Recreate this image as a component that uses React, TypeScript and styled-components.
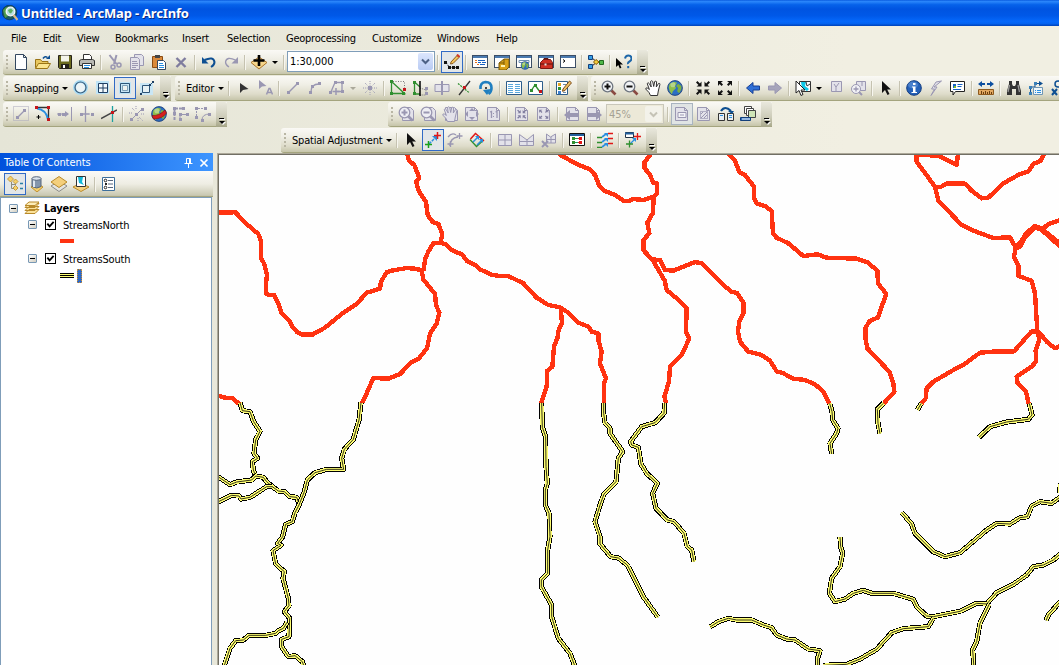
import React from "react";
import styled, { createGlobalStyle, css } from "styled-components";

const GlobalStyle = createGlobalStyle`
  html, body { margin: 0; padding: 0; overflow: hidden; }
  body { font-family: "DejaVu Sans Condensed", "DejaVu Sans", sans-serif; font-stretch: condensed; font-size: 11px; color: #000; }
  * { box-sizing: border-box; }
`;

const Window = styled.div`
  width: 1059px;
  height: 665px;
  display: flex;
  flex-direction: column;
  overflow: hidden;
  background: linear-gradient(90deg, #e5e5d7 0%, #f1efe2 80%);
`;

const TitleBar = styled.header`
  height: 26px;
  flex: none;
  display: flex;
  align-items: center;
  gap: 3px;
  padding: 0 2px;
  background: linear-gradient(180deg, #0a5ce0 0%, #2a86fb 6%, #0662ea 18%, #0054e1 35%, #0058e8 60%, #0568fb 82%, #0464f2 90%, #0042b8 100%);
`;

const TitleText = styled.h1`
  margin: 0;
  font: bold 13px "Noto Sans", "Open Sans", sans-serif;
  line-height: 26px;
  letter-spacing: -0.18px;
  color: #fff;
  text-shadow: 1px 1px 0 #0a2a80;
  white-space: nowrap;
`;

const MenuBar = styled.nav`
  height: 24px;
  flex: none;
  display: flex;
  padding: 1px 0 0 11px;
`;

const MenuItem = styled.span<{ $w: number }>`
  width: ${(p) => p.$w}px;
  flex: none;
  line-height: 24px;
  letter-spacing: -0.25px;
  white-space: nowrap;
`;

const ToolRow = styled.div<{ $indent?: number }>`
  display: flex;
  height: 25px;
  flex: none;
  margin-bottom: 1px;
  padding-left: ${(p) => p.$indent ?? 3}px;
`;

const Bar = styled.div<{ $before?: number }>`
  display: flex;
  flex: none;
  height: 25px;
  margin-left: ${(p) => p.$before ?? 0}px;
  border-bottom: 1px solid #a4a47e;
  border-radius: 3px 0 0 3px;
  background: linear-gradient(180deg, #faf9f5 0%, #f0efe6 35%, #dedcca 75%, #c6c5aa 100%);
`;

const Grip = styled.i`
  width: 7px;
  flex: none;
  height: 16px;
  margin-top: 4px;
  background: radial-gradient(circle at 4px 2px, #b9b6a4 0 1.2px, transparent 1.4px) 0 0 / 7px 4px repeat-y;
`;

const pressed = css`
  background: #e2e6e8;
  border-color: #316ac5;
`;

const Tool = styled.span<{ $on?: boolean; $muted?: boolean }>`
  width: 22px;
  height: 22px;
  flex: none;
  margin-top: 1px;
  border: 1px solid transparent;
  display: flex;
  align-items: center;
  justify-content: center;
  ${(p) => p.$on && pressed}
  ${(p) => p.$muted && css`background: #e0e4e4; border-color: #a9b4c0;`}
`;

const Sep = styled.i`
  width: 6px;
  flex: none;
  height: 15px;
  margin-top: 5px;
  background: linear-gradient(90deg, transparent 2px, #c5c2b0 2px 3px, #f7f6ef 3px 4px, transparent 4px);
`;

const Caret = styled.i<{ $off?: boolean }>`
  width: 11px;
  flex: none;
  display: flex;
  align-items: center;
  justify-content: center;
  &::after {
    content: "";
    border: 3px solid transparent;
    border-top-color: ${(p) => (p.$off ? "#aaa89a" : "#000")};
    border-bottom: 0;
  }
`;

const DropTool = styled(Caret)`
  justify-content: flex-start;
  padding-left: 2px;
`;

const TextTool = styled.span<{ $w: number }>`
  width: ${(p) => p.$w}px;
  flex: none;
  display: flex;
  align-items: center;
  justify-content: space-between;
  padding: 1px 0 1px 4px;
  letter-spacing: -0.2px;
  white-space: nowrap;
`;

const Overflow = styled.span`
  width: 11px;
  height: 25px;
  flex: none;
  margin-left: 2px;
  display: flex;
  flex-direction: column;
  align-items: center;
  justify-content: flex-end;
  gap: 2px;
  padding-bottom: 3px;
  border-radius: 0 2px 2px 0;
  background: linear-gradient(180deg, #e9e8dd, #cdccb9 60%, #a6a688);
  &::before { content: ""; width: 5px; height: 1px; background: #000; box-shadow: 1px 1px #fff; }
  &::after { content: ""; border: 3px solid transparent; border-top-color: #000; border-bottom: 0; filter: drop-shadow(1px 1px 0 #fff); }
`;

const Combo = styled.span<{ $w: number; $off?: boolean }>`
  width: ${(p) => p.$w}px;
  height: ${(p) => (p.$off ? 20 : 21)}px;
  margin: ${(p) => (p.$off ? "2px 1px 0" : "1px 0 0")};
  flex: none;
  display: flex;
  align-items: center;
  justify-content: space-between;
  padding: 1px 1px 1px 2px;
  border: 1px solid ${(p) => (p.$off ? "#c9c7ba" : "#7f9db9")};
  background: ${(p) => (p.$off ? "#ece9d8" : "#fff")};
  color: ${(p) => (p.$off ? "#a5a294" : "#000")};
  font-size: 11px;
  letter-spacing: -0.1px;
`;

const ComboButton = styled.span<{ $off?: boolean }>`
  width: ${(p) => (p.$off ? 17 : 15)}px;
  height: 100%;
  display: flex;
  align-items: center;
  justify-content: center;
  border-radius: 2px;
  background: ${(p) => (p.$off ? "#f3f2ea" : "linear-gradient(180deg, #dce6fd, #b9cbf3)")};
`;

const Workspace = styled.main`
  flex: 1;
  min-height: 0;
  display: flex;
  margin-top: -1px;
`;

const Contents = styled.aside`
  width: 213px;
  flex: none;
  display: flex;
  flex-direction: column;
`;

const PanelTitle = styled.div`
  height: 18px;
  flex: none;
  display: flex;
  align-items: center;
  padding: 1px 4px 0 4px;
  color: #fff;
  letter-spacing: -0.05px;
  background: linear-gradient(90deg, #0051dc, #3d95ff);
  span { flex: 1; }
`;

const PanelTools = styled.div`
  height: 26px;
  flex: none;
  display: flex;
  padding: 1px 0 0 4px;
  background: linear-gradient(180deg, #fbfaf7 0%, #eeede3 50%, #c9c8b1 94%, #a4a47e 97%);
`;

const Tree = styled.div`
  flex: 1;
  width: 212px;
  border: 1px solid #7f9db9;
  border-bottom: 0;
  background: #fff;
  padding-top: 2px;
`;

const Node = styled.div<{ $depth: number }>`
  height: ${(p) => (p.$depth ? 17 : 16)}px;
  display: flex;
  align-items: center;
  padding-left: ${(p) => (p.$depth ? 27 : 8)}px;
  font-weight: ${(p) => (p.$depth ? "normal" : "bold")};
  white-space: nowrap;
`;

const NodeLabel = styled.span<{ $gap: number }>`
  margin-left: ${(p) => p.$gap}px;
  padding-top: ${(p) => (p.$gap > 10 ? 0 : 1)}px;
  letter-spacing: ${(p) => (p.$gap > 10 ? 0.1 : -0.2)}px;
`;

const Expander = styled.i`
  width: 9px;
  height: 9px;
  flex: none;
  border: 1px solid #7898b5;
  border-radius: 1px;
  background: linear-gradient(#000, #000) 1px 3px / 5px 1px no-repeat, linear-gradient(135deg, #fff, #d2cec0);
`;

const Check = styled.i`
  width: 11px;
  height: 11px;
  flex: none;
  margin-left: 8px;
  border: 1px solid #000;
  display: flex;
  svg { width: 9px; height: 9px; }
`;

const SymbolRow = styled.div`
  height: 17px;
  display: flex;
  align-items: center;
  padding-left: 59px;
  gap: 3px;
`;

const NorthSwatch = styled.i`
  width: 14px;
  height: 4px;
  margin-bottom: 1px;
  background: #ff3311;
`;

const SouthSwatch = styled.i`
  width: 14px;
  height: 5px;
  background: repeating-linear-gradient(180deg, #000 0 1px, #ffff73 1px 2px);
`;

const LabelEdit = styled.i`
  width: 5px;
  height: 14px;
  background: #316ac5;
  outline: 1px dotted #d09030;
  outline-offset: -1px;
`;

const MapFrame = styled.section`
  flex: 1;
  margin-left: 4px;
  border: solid #aca899;
  border-width: 1px 0 0 1px;
  padding: 1px 0 0 1px;
  background: #716f64;
  svg { display: block; background: #fefefe; }
`;

/* ---------- icons ---------- */

const D = "#9a97b2";
const DL = "#e3e2ea";
const R = "#c4161c";
const GR = "#2f8f2f";
const B = "#0e4f92";
const LB = "#2a8fe0";

const P = ({ d, s = "none", f = "none", w = 1, dash }: { d: string; s?: string; f?: string; w?: number; dash?: string }) => (
  <path d={d} stroke={s} fill={f} strokeWidth={w} strokeDasharray={dash} />
);

const Dots = ({ at, c, n = 3 }: { at: number[][]; c: string; n?: number }) => (
  <>
    {at.map(([x, y]) => (
      <rect key={`${x}-${y}`} x={x} y={y} width={n} height={n} fill={c} shapeRendering="crispEdges" />
    ))}
  </>
);

const Page = ({ x = 1.5 }: { x?: number }) => <P d={`M${x} 1.5h9l3 3v10h-12z M${x + 9} 1.5v3h3`} s={D} f={DL} />;
const PointerShape = ({ x = 0, c = "#111" }: { x?: number; c?: string }) => (
  <path transform={`translate(${x} 0)`} d="M4 1v12l3-3 2.5 5 2-1-2.3-4.6H13z" fill={c} />
);
const WindowShape = () => (
  <>
    <rect x=".5" y="1.5" width="15" height="12" fill="#fff" stroke="#3c4e66" />
    <rect x="1" y="2" width="14" height="2" fill="#4a7ab0" />
  </>
);
const GlobeShape = ({ cx = 8, cy = 8, r = 7 }: { cx?: number; cy?: number; r?: number }) => (
  <g transform={`translate(${cx} ${cy}) scale(${r / 7})`}>
    <circle r="7" fill="#2d6fc4" stroke="#1d3d73" strokeWidth=".8" />
    <path d="M-5-4l4-2 3 1-2 3 1 2-3 3-1 3-2-3-1-4z" fill="#8fbf4a" />
    <path d="M3-4l3 2v3L4 5 2 3 3 0 1-2z" fill="#7fb042" />
    <circle cx="-2" cy="-3" r="2.4" fill="#fff" opacity=".35" />
  </g>
);
const Corners = ({ c, out }: { c: string; out?: boolean }) =>
  out ? (
    <P f={c} d="M1 1h5l-2 1.6 2 2L4.600 6 2.600 4 1 6z M15 1v5l-1.600-2-2 2L10 4.600l2-2L10 1z M1 15v-5l1.600 2 2-2L6 11.400l-2 2L6 15z M15 15h-5l2-1.600-2-2L11.400 10l2 2L15 10z" />
  ) : (
    <P f={c} d="M6.500 6.500h-5l2-1.600-2.500-2.500L2.400 1l2.500 2.500 1.600-2z M9.500 6.500v-5l1.600 2L13.600 1 15 2.400 12.500 4.900l2 1.600z M6.500 9.500v5l-1.600-2L2.400 15 1 13.600l2.500-2.500-2-1.600z M9.500 9.500h5l-2 1.600L15 13.600 13.600 15l-2.500-2.500-1.600 2z" />
  );
const Lens = ({ minus, off }: { minus?: boolean; off?: boolean }) => (
  <>
    {off && <P d="M4.500 1.500h8l3 3v10h-11z" s={D} f={DL} />}
    <path d="M10 10l4.500 4.500" stroke={off ? D : "#8a4a42"} strokeWidth="2.600" />
    <circle cx="6.500" cy="6.500" r="5.300" fill={off ? "#eeeef4" : "#f1f3f5"} stroke={off ? D : "#6f7680"} strokeWidth="1.300" />
    <path d={minus ? "M3.500 6.500h6" : "M3.500 6.500h6M6.500 3.500v6"} stroke={off ? D : "#111"} strokeWidth="2" />
  </>
);
const Hand = ({ off }: { off?: boolean }) => (
  <P
    d="M5.500 15.500L4 12.500 .700 9q0-1.800 2-.8l1.700 1.300L2.200 3.500q1-1.500 2 0L6.200 7 5.500 1.500q1.200-1.500 2.200 0L8.700 6.500 9.700 1.500q1.400-1 1.900.3L11.300 7l2.200-3.500q1.600-.6 1.400 1L13.300 11l-.8 4.500z"
    s={off ? D : "#333"}
    f={off ? DL : "#fff"}
  />
);

const glyphs: Record<string, React.ReactNode> = {
  newdoc: <P d="M2.500.5h8l3 3v12h-11z M10.500.5v3h3" s="#33475f" f="#fdfeff" />,
  open: (
    <>
      <P d="M.5 13.500v-8h5l1.500 2h6v6z" s="#9a7416" f="#e9c860" />
      <P d="M.5 14.500l3-5h12l-3 5z" s="#9a7416" f="#fbe58f" />
      <P d="M8 4.500q2-3 4.500-1" s={B} w={1.500} />
      <P d="M11 5h4V1z" f={B} />
    </>
  ),
  save: (
    <>
      <P d="M1.500 1.500h13v13h-12l-1-1z" s="#26221a" f="#6b6a1e" />
      <P d="M4 1.500h8v6H4z" f="#f4f4ea" />
      <P d="M4 10h8v4.500H4z" f="#26221a" />
      <P d="M6 11h2v3H6z" f="#fff" />
    </>
  ),
  print: (
    <>
      <P d="M4.500 6V.5h6l2 2V6" s="#333" f="#fff" />
      <P d="M.5 6.500l2-1h11l2 1v5h-15z" s="#333" f="#b9b9b4" />
      <P d="M3.500 9.500h9v5h-9z" s="#333" f="#fff" />
      <P d="M5 11.500h6M5 13.500h5" s={LB} />
    </>
  ),
  cut: (
    <>
      <P d="M2.500 1l7 9M9.500 1L7 10" s={D} w={2} />
      <circle cx="6" cy="13" r="2" fill="none" stroke={D} strokeWidth="1.500" />
      <circle cx="12" cy="11" r="2" fill="none" stroke={D} strokeWidth="1.500" />
    </>
  ),
  copy: (
    <>
      <P d="M5.500.5h7l2 2v9h-9z" s={D} f={DL} />
      <P d="M1.500 3.500h7l2 2v10h-9z M3 7.500h5M3 9.500h6M3 11.500h6M3 13.500h4" s={D} f={DL} />
    </>
  ),
  paste: (
    <>
      <P d="M1.500 2.500h10v11h-10z" s="#8a4b12" f="#d9893a" />
      <P d="M4 1h5v3H4z" f="#444" />
      <P d="M6.500 6.500h6l2 2v7h-8z" s="#33475f" f="#fff" />
      <P d="M8 9.500h4M8 11.500h5M8 13.500h5" s={LB} />
    </>
  ),
  del: <P d="M3.500 4l9 9M12.500 4l-9 9" s="#7f7c9e" w={2.400} />,
  undo: <><P d="M3.500 6q9-4 10 2 0 3-3.500 5" s={B} w={2} /><P d="M1 3v6.500h6.500z" f={B} /></>,
  redo: <><P d="M12.500 6q-9-4-10 2 0 3 3.500 5" s={D} w={1.300} /><P d="M15 3v6.500H8.500z" f={D} /></>,
  add: (
    <>
      <P d="M0 8.500L8 3l8 5.500L8 15z" f="#f6d58a" s="#a9732a" />
      <P d="M8 1v11M2.500 6.500h11" s="#000" w={2.600} />
    </>
  ),
  sketch: (
    <>
      <P d="M2 8.500l3.500 5H14" s="#222" dash="2 1" />
      <Dots c="#111" at={[[0, 7], [4, 12], [12, 12], [8, 12]]} />
      <P d="M7 8L13 1.500l2 2L9 9.500l-2.500.5z" s="#8a5a20" f="#f3c35c" />
      <P d="M13 .500L15.500 3" s="#d23a2a" w={2} />
    </>
  ),
  toc: <><WindowShape /><P d="M3 6.500h2M3 8.500h2M5 10.500h2" s="#e07020" /><P d="M6 6.500h7M6 8.500h3M10 8.500h4M8 10.500h5" s="#1762c4" /></>,
  catalog: <><WindowShape /><P d="M5 9l5-4h5v8l-3 3H5z" f="#d8a017" s="#7a5a08" /><P d="M10 5v8M5 9h5" s="#7a5a08" /><P d="M7 11h4v2H7z" f="#fff3b0" /></>,
  search: <><WindowShape /><P d="M3 6.500h10v2H3z" s="#6f8fb0" f="#fff" /><GlobeShape cx={9} cy={11.500} r={4} /></>,
  toolbox: <><WindowShape /><P d="M2.500 8.500l3-3h7l2 3v6h-12z" f="#cf3022" s="#7e1a12" /><P d="M6 6V4.500h4V6M2 10h12" s="#5a120c" /><P d="M6.500 9.500h2v2h-2z" f="#e7e2dc" /></>,
  python: <><WindowShape /><P d="M3 5.500l2 1.500-2 1.500" s="#000" /></>,
  model: (
    <>
      <P d="M4 4l5 4M4 12l5-4M9 8h4" s="#222" />
      <P d="M.5 1.500h4v4h-4z M.5 10.500h4v4h-4z" s="#123f7a" f="#36a0e8" />
      <P d="M8 5.500l3 2.500-3 2.500L5.500 8z" s="#8a5a08" f="#f2cf3c" />
      <P d="M11.500 6.500h4v4h-4z" s="#236a20" f="#50b848" />
    </>
  ),
  help: (
    <>
      <P d="M0 4v9l2.300-2 1.500 3.500 1.600-.7L4 10.500h3z" f="#000" />
      <path d="M9 4.500q.5-3 3.500-3t3 3q0 2-2 3t-1.300 2.500" fill="none" stroke="#1d66a8" strokeWidth="2" />
      <P d="M11.200 12h2v2.200h-2z" f="#1d66a8" />
    </>
  ),
  circle: <><circle cx="7.500" cy="7.500" r="6" fill="#edf4f6" stroke="#a9dcf5" strokeWidth="3" /><circle cx="7.500" cy="7.500" r="5.500" fill="none" stroke="#3a5d7c" strokeWidth="1.200" /></>,
  grid: <><P d="M1 1h13v13H1z" f="#bfe4f7" /><P d="M3.500 3.500h9v9h-9zM8 3v10M3 8h10" s="#1f3f63" f="#f3fafd" /></>,
  square: <><P d="M2 2h12v12H2z" f="#bfe4f7" /><P d="M3.500 3.500h9v9h-9z" s="#2d5578" f="#c8e6f5" /><P d="M5.500 5.500h5v5h-5z" s="#7ea0b8" f="#eff3f0" /></>,
  vertex: <><P d="M1 3h13v12H1z" f="#c9e6f5" /><P d="M3.500 5.500h7v7h-7z" s="#2d5578" f="#e6f1f4" /><P d="M10 6l4-4M1 14.500l2.500-2" s="#2d5578" /><Dots c="#1f3f63" n={2} at={[[13, 1], [10, 4], [1, 13]]} /></>,
  edit: <P d="M5 3v10l3-3 5.500-1z" f="#333" />,
  editA: <><P d="M2 0v9l3-2.500L9.500 6z" f={D} /><P d="M9.500 14.500l2.500-6h1l2.500 6M10.500 12.500h4" s={D} w={1.500} /></>,
  line: <><P d="M4 12l9-9" s={D} w={1.500} /><Dots c={D} at={[[2, 11], [11, 2]]} /></>,
  arc: <><P d="M4 12q0-8 8-8" s={D} w={1.300} /><Dots c={D} at={[[2, 11], [4, 5], [11, 2]]} /></>,
  trace: <><P d="M1.500 13L6 2.500h7v9H8" s={D} w={1.300} /><P d="M7 8v7M3.500 11.500h7" s={D} w={1.500} /><Dots c={D} at={[[5, 1], [12, 1], [12, 10], [0, 11]]} /></>,
  point: <><P d="M8 1v14M1 8h14M3 3l10 10M13 3L3 13" s={D} dash="1 1.200" /><Dots c={D} n={4} at={[[6, 6]]} /></>,
  vertices: <><P d="M1.500 1.500v12h13L1.500 1.500" s={GR} w={1.300} /><P d="M3 1.500h11.500V13" s="#777" dash="1 1.500" /><Dots c={GR} n={3} at={[[0, 0], [0, 12], [12, 12]]} /><Dots c={R} n={3} at={[[13, 8]]} /></>,
  reshape: <><P d="M2.500 2v12H8M2.500 2L8 7" s={GR} w={1.300} /><P d="M8 8l6 2v5H8" s="#777" dash="1 1" /><P d="M8 1v15" s="#000" w={1.500} /><Dots c={GR} at={[[1, 1], [1, 12]]} /><Dots c={D} at={[[13, 7], [13, 12]]} /></>,
  cutpoly: <><P d="M1 4.500h14v7H1z" s={D} f={DL} /><P d="M8 1v14" s={D} w={2} /></>,
  split: <><P d="M3 15L14 1" s="#333" w={1.300} /><P d="M2 3.500l11 9" s={GR} w={1.200} dash="2 1" /><Dots c={R} n={3} at={[[7, 6]]} /></>,
  rotate: <><P d="M2.500 9q-.5-6.500 5-7 6 0 6 6 0 4-3 6" s="#1f7fc0" w={2.600} /><P d="M5 10l8-1-4 6z" f="#1f7fc0" /><Dots c="#444" n={2} at={[[7, 7]]} /></>,
  attrs: <><P d="M.5 1.500h15v13H.5z" s="#2d5d8a" f="#fff" /><P d="M2 4.500h5M9 4.500h5M2 6.500h5M9 6.500h5M2 8.500h5M9 8.500h5M2 10.500h5M9 10.500h5M2 12.500h5M9 12.500h5" s="#5aa8dc" /></>,
  sketchprops: <><P d="M.5 1.500h14v13H.5z" s="#2d5d8a" f="#fff" /><P d="M3 11l4-6 5 7" s={GR} w={1.300} /><Dots c={GR} at={[[6, 4], [2, 9]]} /><Dots c={R} at={[[11, 10]]} /></>,
  create: <><P d="M.5 1.500h11v13H.5z" s="#2d5d8a" f="#fff" /><Dots c="#e4a420" at={[[2, 3]]} /><Dots c={GR} at={[[2, 7]]} /><Dots c="#3a7fd0" at={[[2, 11]]} /><P d="M7 4.500h3M7 8.500h3M7 12.500h3" s="#6c8aa6" /><P d="M7 9l6.500-8 2 1.800L9 10.500l-2.500.8z" s="#7a4a18" f="#eec265" /></>,
  zoomin: <Lens />,
  zoomout: <Lens minus />,
  hand: <Hand />,
  globe: <GlobeShape r={7.400} />,
  fixin: <Corners c="#111" />,
  fixout: <Corners c="#111" out />,
  back: <P d="M1.500 8L8 2.500v3.500H14.500v4H8V13.500z" f="#2f6fd6" s="#173f94" />,
  fwd: <P d="M14.500 8L8 2.500v3.500H1.500v4H8v3.500z" f="#a6a4bb" s={D} />,
  select: <><P d="M4.500 1.500h11v10h-11z" s="#333" f="#fff" /><P d="M6 2h5l-1 4 4 3-2 2-5-3z" f="#10c8e8" /><P d="M11 2l1 4 3-2" s="#333" /><P d="M1 1v12l3-2.500 2 5 2-1-2-4.500h4z" f="#fff" s="#222" /></>,
  clear: <P d="M3.500 1.500h10v10h-10z M6 4l2 3v4M8 7l3-4" s={D} f={DL} />,
  zoomsel: <><P d="M6.500 1.500h9v9h-9zM12 2v4" s={D} f={DL} /><P d="M9 12l3 3" s={D} w={2} /><circle cx="6" cy="9" r="4.500" fill="#f2f2f6" stroke={D} /><P d="M3.500 9h5M6 6.500v5" s={D} w={1.300} /></>,
  pointer: <PointerShape />,
  info: <><circle cx="8" cy="8" r="7.300" fill="#2460b8" stroke="#123c80" /><ellipse cx="7" cy="5" rx="5" ry="3.500" fill="#78a9e6" opacity=".45" /><P d="M7 3h2.500v2H7zM6 6.500h3.500V12H11v1H5.500v-1H7V7.500H6z" f="#fff" /></>,
  bolt: <P d="M13.500 1L6 7h3l-6 8.500L6.500 9h-3L8 2z" s={D} f={DL} />,
  html: <><P d="M.5 1.500h14v10h-9L3 15v-3.500H.5z" s="#222" f="#fff" /><P d="M3 4h3v4H3z" f="#1762c4" /><P d="M4 6h2v2H4z" f="#7bbf28" /><P d="M7.500 4.500h5M7.500 6.500h4M3 9.500h8" s="#1762c4" /></>,
  measure: <><P d="M0 4l4-3v2h3v2H4v2zM16 4l-4-3v2H9v2h3v2z" f="#0c4fa0" /><P d="M.5 9.500h15v5H.5z" s="#8d5a1e" f="#e2a860" /><P d="M3.500 11v3M5.500 12v2M7.500 11v3M9.500 12v2M11.500 11v3M13.500 12v2" s="#6a3e10" /></>,
  binoc: <><P d="M3 1h3v3l1 2h2l1-2V1h3v3l2 7v4h-5V9H6v6H1v-4l2-7z" f="#333" /><P d="M3.500 5L2 12M12 5l1.500 7" s="#999" w={1.300} /></>,
  route: <><P d="M2.500 12V7H7V3.500h5" s={B} /><P d="M11 1l4 2.500L11 6z" f={B} /><P d="M5.500 7.500h9v7h-9z" s="#6e95b4" f="#eef6fb" /><P d="M7 10.500h1M9 10.500h4M7 12.500h1M9 12.500h4" s={LB} /><Dots c="#3a80b8" at={[[1, 12], [1, 6], [6, 2]]} /></>,
  xy: <><circle cx="8" cy="4" r="3" fill="none" stroke={B} strokeWidth="1.500" /><P d="M2 9l5 6M7 9l-5 6" s={B} w={2} /></>,
  topo1: <><P d="M.5.500h15v14H.5z" s="#a8a6ba" dash="1 1" /><P d="M4 12l8-8" s={D} w={1.300} /><Dots c={D} at={[[3, 10], [10, 3]]} /></>,
  topo2: <><P d="M1 1.500h12.500V15" s="#333" w={1.300} /><P d="M2 2.500q9 1 11 11" s={LB} w={2} /><Dots c={R} at={[[0, 0], [12, 0], [12, 12]]} /><P d="M3.500 9v4M1.500 11h4" s="#000" /></>,
  topo3: <><P d="M0 8h11M14.500 1v14" s={D} /><P d="M8 5l4 3-4 3z" f={D} /><Dots c={D} at={[[1, 7], [5, 7]]} /></>,
  topo4: <><P d="M6.500 0v16M1 8h9" s={D} w={1.300} /><P d="M10 8h6" s={D} dash="1 1" /><Dots c={D} at={[[1, 7], [12, 7]]} /></>,
  topo5: <><P d="M0 12.500L16 4" s="#444" w={1.500} /><P d="M11.500 0v16" s="#1ca0a0" w={1.300} /><Dots c={R} at={[[10, 5]]} /></>,
  topo6: <><P d="M3 2l3 3M10 11l4 4M7 0v4M0 7h4M12 8h4M9 12v4" s={D} dash="1 1" /><P d="M3 13L13 3" s={D} /><Dots c={D} at={[[1, 12], [6, 7], [12, 2]]} /></>,
  topoglobe: <><GlobeShape cx={8} r={7.400} /><P d="M1 9.500Q8 10 14 4l1.500 3q-4 6-13 6z" f="#d61f1f" s="#7a1010" w={0.6} /></>,
  topo7: <><P d="M1.500 14V2.500H11" s={D} dash="3 1" w={2} /><P d="M7 14V8.500h8" s={D} /><Dots c={D} at={[[0, 1], [0, 6], [6, 7], [6, 12], [13, 7], [9, 1]]} /></>,
  topo8: <><P d="M1.500 13V2.500H10" s={D} dash="2 1" /><P d="M7 14q0-6 8-6" s={D} /><Dots c={D} at={[[0, 1], [0, 10], [9, 1], [6, 13], [13, 7]]} /></>,
  lzoomin: <Lens off />,
  lzoomout: <Lens off minus />,
  lhand: <><P d="M3.500 1.500h9l3 3v10h-12z" s={D} f={DL} /><Hand off /></>,
  lfull: <><Page /><P d="M8 2l3 3H5zM8 14l3-3H5zM1 8l3-3v6zM15 8l-3-3v6z" f={D} /></>,
  lone: <><Page /><P d="M4 6l1.500-.5V12M9.500 6l1.500-.5V12" s={D} w={1.300} /><Dots c={D} n={1} at={[[7, 7], [7, 10]]} /></>,
  lfixin: <><Page /><g transform="translate(2.500 3) scale(.65)"><Corners c="#7f7c9e" /></g></>,
  lfixout: <><Page /><g transform="translate(2.500 3) scale(.65)"><Corners c="#7f7c9e" out /></g></>,
  lback: <><Page x={2.500} /><P d="M0 9l6-5v3h8v4H6v3z" f={D} /></>,
  lfwd: <><Page /><P d="M16 9l-6-5v3H2v4h8v3z" f={D} /></>,
  draft: <><Page /><P d="M4 6.500h8v5H4zM6 9h4" s={D} f="#f4f4f7" /></>,
  focus: <><Page /><P d="M4.500 5.500h7v7h-7z" s="#7f7c9e" dash="1 1" /><P d="M5 12l6-6M5 8l2-2M8 12l3-3" s={D} /></>,
  layout: <><P d="M.5 7.500h6v7h-6zM9.500 7.500h6v7h-6z" s="#333" f="#e9eef2" /><P d="M2 9.500h3M11 9.500h3M11 11.500h3" s={LB} /><P d="M3 5q4-6 10 0" s={B} w={2.200} /><P d="M10 5h6l-2 3z" f={B} /></>,
  ddp: <><P d="M4.500.500h7v7h-7z" s="#444" f="#fff" /><P d="M6.500 2.500h7v7h-7z" s="#444" f="#fff" /><P d="M8.500 4.500h7v7h-7z" s="#444" f="#cfe5b8" /><P d="M.5 11.500h10v3H.5z" s="#123f7a" f="#2a6fc0" /><P d="M3 12v2M5 12v2M7 12v2M9 12v2" s="#fff" /></>,
  link: <><P d="M4 12l7-7" s={LB} w={1.500} dash="3 1" /><P d="M7 4h5v5z" f={LB} /><P d="M3.500 9v7M0 12.500h7" s="#1aa01a" w={1.500} /><P d="M12.500 0v7M9 3.500h7" s="#e01818" w={1.500} /></>,
  modlink: <><P d="M3 14q0-8 8-9" s={D} w={1.500} /><P d="M1 5q4-5 8-2M12.500 1v6M9.500 4h6M3.500 9v6M.5 12h6" s={D} w={1.300} /></>,
  multilink: <><P d="M1 7.500l6.500 7L14.500 8" s={GR} w={1.300} /><P d="M1.500 7l5-5.500M6 1l9 8" s="#e01818" w={1.500} /><P d="M4 10l5-5M8 13l5-5" s={LB} w={1.500} /><P d="M6 4h4v4zM10 7h4v4z" f={LB} /></>,
  sgrid: <P d="M1.500 2.500h13v11h-13zM8 2v11M1 8h13" s={D} f={DL} />,
  edge: <P d="M.5 13.500v-11L8 8l6.500-5.500v11zM8 8v5M1 9.500h13" s={D} f={DL} />,
  delnode: <><P d="M5.500 2l4 3 5-3v9h-9zM10 5v6M5 7.500h10" s={D} f={DL} /><P d="M1 9l6 6M7 9l-6 6" s={D} w={2} /></>,
  linktable: <><P d="M.5 1.500h15v12H.5z" s="#111" f="#fff" /><P d="M1 3h14" s="#235f9c" w={2} /><P d="M4 6.500h8M4 10.500h8" s="#1c9a55" /><P d="M9 6.500h3M9 10.500h3" s="#e01818" /><Dots c={GR} at={[[3, 5], [3, 9]]} /><Dots c="#e01818" at={[[10, 5], [10, 9]]} /></>,
  edgematch: <><P d="M0 5.500h5M0 10.500h5M0 15.500h5" s={GR} w={1.300} /><P d="M11 1.500h5M11 6.500h5M11 11.500h5" s="#e01818" w={1.300} /><P d="M5 5l4-3M5 10l4-3M5 15l4-3" s={LB} w={1.600} /><P d="M7 1h4v4zM7 6h4v4zM7 11h4v4z" f={LB} /></>,
  attrxfer: <><P d="M.5.500h8v5h-8z" s="#234" f="#fff" /><P d="M0 1.500h9" s="#235f9c" w={2} /><P d="M5 12l5-5" s={LB} w={1.300} /><P d="M7 6h4v4z" f={LB} /><P d="M4.500 8.500v7M1 12h7" s={GR} w={1.300} /><P d="M12.500 1v7M9 4.500h7" s="#e01818" w={1.300} /></>,
  listdraw: <><P d="M4.500 6v6.500h3M5 8.500h4" s="#8c8c80" /><P d="M3.500 0l3 3-3 3-3-3zM8.500 3l2.500 2.500L8.500 8 6 5.500zM8.500 9.500L11 12l-2.500 2.500L6 12z" f="#f3d06a" s="#b98a2a" w={0.8} /><P d="M13 7.500h3M13 12.500h3" s="#2a7fa6" w={1.500} /></>,
  listsource: <><P d="M2 11l6 5 6-5-3-2H5z" f="#f4cf6c" s="#c09030" /><P d="M3 2.500v8q5 3 9 0v-8z" f="#8496ac" s="#56667c" /><P d="M5 3v8" s="#dfe7f0" w={2} /><ellipse cx="7.500" cy="2.500" rx="4.500" ry="1.800" fill="#dbe4ee" stroke="#56667c" /></>,
  listvis: <><P d="M0 10l8-5 8 5-8 5.500z" f="#e4e4e0" s="#8c8c88" /><P d="M0 6l8-5.500L16 6l-8 5.500z" f="#f4cf7c" s="#b98a2a" /></>,
  listsel: <><P d="M0 11l8-4 8 4-8 4.500z" f="#f4cf7c" s="#b98a2a" /><P d="M3.500.5h9v10h-9z" s="#333" f="#fff" /><P d="M5 1h5l-1 5 2 3-5-2z" f="#10b8d8" /></>,
  options: <><P d="M1.500 1.500h12v13h-12z" s="#3d6f9c" f="#fff" /><P d="M7 4.500h5M7 11.500h5M7 8h5" s="#56667c" /><circle cx="4.500" cy="4.500" r="1.300" fill="none" stroke="#222" /><circle cx="4.500" cy="11.500" r="1.300" fill="none" stroke="#222" /><Dots c="#222" n={2} at={[[4, 7]]} /></>,
  frame: <><P d="M1 13.500l4-4h10l-4 4zM1 10.500l4-4h10l-4 4zM1 7.500l4-4h10l-4 4z" f="#fbe29a" s="#b98a2a" /><P d="M1 5.500L5 2h10l-4 3.500z" f="#fdedb8" s="#b98a2a" /></>,
  app: <><circle cx="7.500" cy="7.500" r="7.300" fill="#1c5a5e" stroke="#0a2a48" strokeWidth=".6" /><P d="M1 5l3-3 3 1-2 4 1 4-3 2z" f="#4f9a4a" /><circle cx="8.500" cy="6.500" r="4.300" fill="#b9dfe0" stroke="#f4f8fa" strokeWidth="1.300" /><P d="M6 5l3-1.500 2 2-2 3-2-1z" f="#5cb060" /><P d="M11.500 10l4 5" s="#d8b888" w={2.200} /></>,
};

const Icon = ({ name }: { name: string }) => (
  <svg width="16" height="16" viewBox="0 0 16 16" aria-hidden="true">
    {glyphs[name]}
  </svg>
);

const FrameIcon = styled.svg`
  flex: none;
  margin-left: 6px;
`;

/* "|" separator, "v" caret, "v-" disabled caret, "*name" pressed, "~name" checked but disabled */
const Tools = ({ list }: { list: string }) => (
  <>
    {list.split(" ").map((t, i) => {
      if (t === "|") return <Sep key={i} />;
      if (t === "v") return <DropTool key={i} />;
      if (t === "v-") return <DropTool key={i} $off />;
      const name = t.replace(/^[*~]/, "");
      return (
        <Tool key={i} $on={t[0] === "*"} $muted={t[0] === "~"}>
          <Icon name={name} />
        </Tool>
      );
    })}
  </>
);

const Chevron = ({ c }: { c: string }) => (
  <svg width="9" height="7" viewBox="0 0 9 7">
    <path d="M1 1.500l3.500 3.500L8 1.500" fill="none" stroke={c} strokeWidth="2" />
  </svg>
);

const menus: [string, number][] = [
  ["File", 32], ["Edit", 34], ["View", 38], ["Bookmarks", 67], ["Insert", 45], ["Selection", 59],
  ["Geoprocessing", 86], ["Customize", 65], ["Windows", 59], ["Help", 40],
];

/* ---------- stream layers: sheets of vertices, three units to a pixel ---------- */

type Sheet = { x: number; y: number; lines: string[] };

const north: Sheet[] = [
  {
    x: 215, y: 150,
    lines: [
      "8,186 18,188 45,188 60,186 95,222 130,252 138,275 138,325 147,340 156,375 153,400 153,430 160,435 178,436 190,460 200,490 225,515 232,530 247,547 262,554 292,554 330,533 380,492 425,462 455,428 495,416 498,395 515,367 530,362 575,354 600,356 625,362",
      "576,10 582,32 598,45 613,84 603,95 612,125 633,155 638,195 653,216 670,222 682,252 677,278",
      "625,362 631,325 640,305 655,280 677,278 692,283 712,301 742,314 755,332 782,346 795,358 830,374 855,378 880,378 925,400 965,443 1000,465 1035,472 1060,488 1090,518 1120,530 1130,545 1150,550 1150,570 1160,605 1155,640 1173,685 1167,700 1167,760",
      "620,362 625,388 660,432 663,465 673,488 665,520 645,550 636,595 612,625 588,638 555,672 520,686 475,684 455,730 440,760",
      "8,737 30,743 52,744 74,763",
    ],
  },
  {
    x: 500, y: 150,
    lines: [
      "176,12 230,42 270,58 285,75 298,108 312,122 345,135 370,152 388,153 400,147 430,150 455,142 462,140",
      "452,12 433,38 433,53 450,75 460,98 471,100 471,130 462,140 458,190 442,218 448,250 430,270 430,300 455,328 480,330 488,345 495,360 520,362 550,350 585,336 605,340 670,405 695,425 712,430 730,458 730,490 718,515 714,545 720,575 745,605 785,615 810,632 830,664 850,670 880,686 915,690 945,703 970,725 989,762",
      "458,330 494,392 500,420 530,445 560,475 558,545 568,565 545,615 510,650 507,695 493,740 498,760",
      "686,12 705,32 718,66 735,75 762,110 763,145 770,160 795,168 815,183 819,250 830,263 865,280 910,318 952,313 980,323 1070,326 1102,337 1132,362 1134,400 1159,432 1145,470 1134,502 1108,514 1096,535 1096,565 1102,595 1135,630 1168,665 1180,700 1183,725 1150,762",
      "182,472 186,520 176,540 172,565 162,590 157,650 142,662 140,710 123,760",
    ],
  },
  {
    x: 780, y: 150,
    lines: [
      "408,10 410,35 465,110 475,152 545,225 580,242 640,264 690,262 700,280 708,295 720,290 735,262 765,232 785,240 850,298",
      "708,288 722,278 738,250 765,228 785,236 850,288",
      "785,240 805,222 850,207",
      "465,110 480,112 500,101 555,101 575,122 605,145 625,143 670,100 720,72 745,65 760,42 782,32 792,12",
      "408,14 475,17 530,45 534,12",
      "708,290 702,320 716,350 715,378 755,392 765,430 768,480 772,540 778,570 767,600 768,635 755,650 710,680 712,697 738,725 746,762",
      "424,762 437,745 440,715 460,695 520,660 550,645 600,608 650,604 702,604 755,544 775,544 800,575 825,595 845,585",
    ],
  },
];

const south: Sheet[] = [
  {
    x: 780, y: 150,
    lines: [
      "424,760 412,780",
      "149,760 156,785 158,810 174,835 170,850 150,880 155,912",
      "310,760 292,778 294,820 300,851",
      "748,760 756,795 745,808 680,816 630,830 597,862",
    ],
  },
  {
    x: 215, y: 390,
    lines: [
      "75,38 82,62 105,65 116,95 135,124 122,150 117,190 128,205 112,215 115,240 122,258",
      "6,258 45,284 65,276 110,270 122,258 145,262 155,275 172,290 190,303 208,305 225,320 245,322 252,340",
      "6,337 50,316 72,318 78,327 105,322 155,290 172,290",
      "438,38 432,90 415,148 388,178 380,205 386,238 335,238 300,248 277,270 268,305 252,345 240,368 232,395 212,403 203,440 188,460 198,466 174,482 182,522 208,545 204,565 220,625 222,647 208,665 224,685 222,740 200,748 200,770 220,800 240,797 262,815 268,832",
      "216,697 205,715 190,722 182,730 152,736 102,736 85,750 62,752 45,775 26,832",
    ],
  },
  {
    x: 500, y: 390,
    lines: [
      "125,38 127,112 137,140 138,230 142,280 136,300 136,345 147,370 150,440 143,480 143,550 124,570 124,590 155,645 155,680 175,745 210,790 226,832",
      "311,38 311,70 315,98 330,115 330,130 368,185 355,205 348,275 312,312 300,345 285,395 300,440 300,462 332,500 355,504 382,525 410,580 430,620 474,682",
      "494,38 492,70 465,98 425,110 392,155 395,165 415,172 423,222 440,250 472,280 458,310 468,355 502,390 522,395 552,430 562,470 575,480 582,515",
      "630,711 655,695 685,685 710,690 755,690 790,705 815,713 830,735 860,747 885,750 925,777 960,782 953,805 953,832",
    ],
  },
  {
    x: 780, y: 450,
    lines: [
      "180,261 182,290 188,310 180,350 155,385 148,430 165,455 195,447 220,430 250,421 275,430 340,430 400,448 410,470 440,498 460,500 540,484 590,460 620,462 650,428 700,403 740,375 760,350 790,345 820,330 845,308",
      "130,646 200,643 240,627 290,598 335,548 370,536 445,530 460,505",
      "628,462 600,520 590,575 578,600 582,655",
      "365,187 395,222 405,250 460,305 495,320 540,308 620,240 650,220 690,222 720,203 742,200 755,168 780,155 815,160 845,138",
      "798,512 805,495 845,450",
      "841,100 839,130",
    ],
  },
];

const Streams = ({ sheets, strokes }: { sheets: Sheet[]; strokes: [string, number][] }) => (
  <g fill="none" strokeLinejoin="round" shapeRendering="crispEdges">
    {sheets.map((s, i) => (
      <g key={i} transform={`translate(${s.x} ${s.y}) scale(${1 / 3})`}>
        {s.lines.map((pts) => strokes.map(([c, w]) => <polyline key={pts + w} points={pts} stroke={c} strokeWidth={w * 3} />))}
      </g>
    ))}
  </g>
);

const CheckMark = () => (
  <Check>
    <svg viewBox="0 0 10 10">
      <path d="M1.500 4l2.500 3L8.500 2" fill="none" stroke="#000" strokeWidth="2" />
    </svg>
  </Check>
);

export default function App() {
  return (
    <>
      <GlobalStyle />
      <Window>
        <TitleBar>
          <Icon name="app" />
          <TitleText>Untitled - ArcMap - ArcInfo</TitleText>
        </TitleBar>
        <MenuBar>
          {menus.map(([m, w]) => (
            <MenuItem key={m} $w={w}>{m}</MenuItem>
          ))}
        </MenuBar>

        <ToolRow>
          <Bar>
            <Grip />
            <Tools list="newdoc open save print | cut copy paste del | undo redo | add v |" />
            <Combo $w={148}>
              1:30,000
              <ComboButton><Chevron c="#4d6185" /></ComboButton>
            </Combo>
            <Tools list="| *sketch | toc catalog search toolbox python | model | help" />
            <Overflow />
          </Bar>
        </ToolRow>

        <ToolRow>
          <Bar>
            <Grip />
            <TextTool $w={60}>Snapping<Caret /></TextTool>
            <Tools list="circle grid *square vertex" />
            <Overflow />
          </Bar>
          <Bar $before={4}>
            <Grip />
            <TextTool $w={44}>Editor<Caret /></TextTool>
            <Tools list="| edit editA | line arc trace v- point | vertices reshape cutpoly split rotate | attrs sketchprops | create" />
            <Overflow />
          </Bar>
          <Bar $before={3}>
            <Grip />
            <Tools list="zoomin zoomout hand globe | fixin fixout | back fwd | select v clear zoomsel | pointer | info bolt html | measure | binoc route xy" />
          </Bar>
        </ToolRow>

        <ToolRow>
          <Bar>
            <Grip />
            <Tools list="topo1 topo2 topo3 topo4 topo5 | topo6 topoglobe topo7 topo8" />
            <Overflow />
          </Bar>
          <Bar $before={161}>
            <Grip />
            <Tools list="lzoomin lzoomout lhand lfull lone | lfixin lfixout | lback lfwd" />
            <Combo $w={58} $off>
              45%
              <ComboButton $off><Chevron c="#c5c3b6" /></ComboButton>
            </Combo>
            <Tools list="| ~draft focus layout ddp" />
            <Overflow />
          </Bar>
        </ToolRow>

        <ToolRow $indent={281}>
          <Bar>
            <Grip />
            <TextTool $w={106}>Spatial Adjustment<Caret /></TextTool>
            <Tools list="| pointer *link modlink multilink | sgrid edge delnode | linktable | edgematch | attrxfer" />
            <Overflow />
          </Bar>
        </ToolRow>

        <Workspace>
          <Contents>
            <PanelTitle>
              <span>Table Of Contents</span>
              <svg width="25" height="12" viewBox="0 0 25 12" fill="none" stroke="#fff">
                <path d="M2.500 6.500v-5h4v5M5.500 2v4M.5 6.500h8M4.500 7v4" />
                <path d="M16.500 2.500l7 7M23.500 2.500l-7 7" strokeWidth="1.700" />
              </svg>
            </PanelTitle>
            <PanelTools>
              <Tools list="*listdraw listsource listvis listsel | options" />
            </PanelTools>
            <Tree>
              <Node $depth={0}>
                <Expander />
                <FrameIcon width="16" height="16" viewBox="0 0 16 16">{glyphs.frame}</FrameIcon>
                <NodeLabel $gap={4}>Layers</NodeLabel>
              </Node>
              <Node $depth={1}>
                <Expander />
                <CheckMark />
                <NodeLabel $gap={7}>StreamsNorth</NodeLabel>
              </Node>
              <SymbolRow><NorthSwatch /></SymbolRow>
              <Node $depth={1}>
                <Expander />
                <CheckMark />
                <NodeLabel $gap={7}>StreamsSouth</NodeLabel>
              </Node>
              <SymbolRow><SouthSwatch /><LabelEdit /></SymbolRow>
            </Tree>
          </Contents>
          <MapFrame>
            <svg width="840" height="510" viewBox="219 155 840 510">
              <Streams sheets={north} strokes={[["#ff3311", 4.4]]} />
              <Streams sheets={south} strokes={[["#000", 5.2], ["#ffff73", 3.5], ["#000", 0.8]]} />
            </svg>
          </MapFrame>
        </Workspace>
      </Window>
    </>
  );
}
